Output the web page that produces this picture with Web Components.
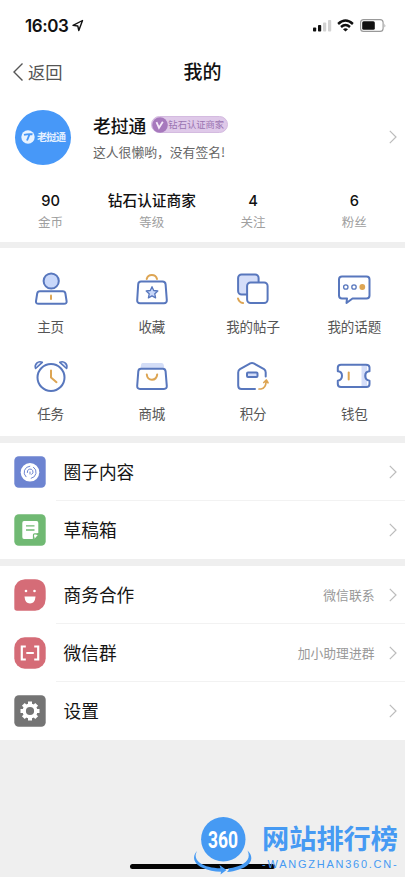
<!DOCTYPE html>
<html lang="zh-CN">
<head>
<meta charset="utf-8">
<title>我的</title>
<style>
html,body{margin:0;background:#efefef}
body{width:405px;height:877px;overflow:hidden;font-family:"Noto Sans CJK SC",sans-serif;color:#111}
</style>
</head>
<body>
<mine-page></mine-page>
<script>
const define = (name, html) => {
  const t = document.createElement('template');
  t.innerHTML = html;
  customElements.define(name, class extends HTMLElement {
    constructor() {
      super();
      this.attachShadow({mode: 'open'}).append(t.content.cloneNode(true));
    }
  });
};

const B = 'fill="none" stroke="#5877bd" stroke-width="2" stroke-linecap="round" stroke-linejoin="round"';
const O = 'fill="none" stroke="#dda553" stroke-width="2" stroke-linecap="round" stroke-linejoin="round"';
const ICONS = {
  home: `<g ${B}><circle cx="20.2" cy="11" r="7.6" style="fill:#c9d8fa"/><path d="M9 21.3H31.6Q34 21.3 34.4 23.5L35.6 31.2Q36 33.8 33 33.8H7.6Q4.6 33.8 5 31.2L6.2 23.5Q6.600 21.300 9 21.300Z"/></g><path ${O} d="M20 25.600V29"/>`,
  favorite: `<path ${O} d="M14.700 9A5.300 5.300 0 0 1 25 9"/><path ${B} d="M9 11.500H30.500Q33.300 11.500 33.600 14.300L34.800 30Q35 33.300 32 33.300H8Q5 33.300 5.200 30L6.200 14.300Q6.400 11.500 9 11.500Z"/><path ${B} style="stroke-width:1.300;fill:#c9d8fa" d="M20 16.700L21.700 20.500L25.800 21L22.800 23.800L23.600 27.900L20 25.900L16.400 27.900L17.200 23.800L14.200 21L18.300 20.500Z"/>`,
  posts: `<rect ${B} x="5.100" y="4.500" width="20.500" height="20" rx="3.500" style="fill:#d5def9"/><rect ${B} x="14.100" y="12.500" width="20.500" height="20.500" rx="3.500" style="fill:#fff"/><path ${O} d="M5 28.500Q6.200 32.500 10 33"/>`,
  topics: `<path ${B} d="M8 6.500H32.500Q35.500 6.500 35.500 9.500V25.500Q35.500 28.500 32.500 28.500H18.500L12.500 33L13 28.500H8Q5 28.500 5 25.500V9.500Q5 6.500 8 6.500Z"/><g ${B} style="stroke-width:1.300"><circle cx="11.800" cy="17" r="2.200"/><circle cx="20" cy="17" r="2.200"/></g><circle cx="28.300" cy="17" r="2.900" fill="#dda553"/>`,
  tasks: `<g ${B}><circle cx="20" cy="20.500" r="13.500"/><path style="stroke-width:1.600;fill:#e4ebff" d="M4.600 11.500C3 7.500 7 3.300 11.300 5.300ZM35.600 11.500C37 7.500 33.200 3.300 28.800 5.300Z"/></g><path ${O} d="M20 13.500V20.500L25.500 25.200"/>`,
  shop: `<path d="M10.500 6H29.500Q31.500 6 31.800 8L32.300 11H8.500L9 8Q9.200 6 10.500 6Z" fill="#d3ddf7"/><path ${B} d="M9 11.800H30.800Q33.300 11.800 33.600 14.300L34.800 28.800Q35 32 32 32H8Q5 32 5.200 28.800L6.300 14.300Q6.500 11.800 9 11.800Z"/><path ${O} d="M14.800 17.500Q15.300 22.700 20 22.700Q24.500 22.700 25.200 17.500"/>`,
  points: `<path ${B} d="M22 32H8.500Q5.200 32 5.200 28.500V15.500Q5.200 13.300 7 12.200L17.300 6.400Q19 5.500 20.700 6.400L31 12.200Q32.700 13.300 32.700 15.500V19.500"/><rect ${B} x="14" y="15.500" width="10.500" height="4.500" rx="1" style="fill:#d5def9"/><path ${O} style="stroke-width:1.700" d="M26 32H28Q32.800 31.500 33.200 24M30.800 25.500L33.300 23L35 25.800"/>`,
  wallet: `<path d="M27.500 8.500H33V30.500H27.500Z" fill="#d5def9"/><path ${B} d="M7 7.700H32Q35.500 7.700 35.500 10.500V14.200Q31.200 14.500 31.200 18.800Q31.200 23.200 35.500 23.700V27Q35.500 30 32.500 30H7Q3.800 30 3.800 27V23.700Q8 23.200 8 18.800Q8 14.500 3.800 14.200V10.500Q3.800 7.700 7 7.700Z"/><path ${O} d="M14.700 15.500V22.500"/>`,
  circle: `<rect x=".3" y=".3" width="31.400" height="31.400" rx="4.500" fill="#6d84d1"/><circle cx="16" cy="16.300" r="9.300" fill="#fff"/><g fill="none" stroke="#6d84d1" stroke-width="1" stroke-linecap="round"><path d="M12 20.800A6.200 6.200 0 0 1 15.800 10.200"/><path d="M19.500 11.200A6.200 6.200 0 0 1 17.200 22.300"/><path d="M13.300 16.500A2.900 2.900 0 1 1 17.700 18.400M16 16V18"/></g>`,
  draft: `<rect x=".3" y=".3" width="31.400" height="31.400" rx="4.500" fill="#70b973"/><path d="M10 7H22.500Q24.300 7 24.300 9V18.500L18.500 25H10Q8.300 25 8.300 23V9Q8.300 7 10 7Z" fill="#fff"/><path d="M12 11.800H20.500M12 16H20.500" stroke="#70b973" stroke-width="1.300"/><path d="M19.500 24.500V20.800Q19.500 19.800 20.500 19.800H24" fill="none" stroke="#70b973" stroke-width="1.200"/><path d="M20.500 24.800V21H23.800Z" fill="#fff"/>`,
  coop: `<path d="M11 .3H21Q31.700 1 31.700 12V20Q31 31 21 31.700H3Q.3 31.700 .3 29V11Q1 1 11 .3Z" fill="#d56c77"/><path d="M10.500 17.500H21.500Q21 24.500 16 24.500Q11 24.500 10.500 17.500Z" fill="#fff"/><circle cx="12" cy="12" r="1.300" fill="#fff"/><circle cx="20.500" cy="12" r="1.300" fill="#fff"/>`,
  group: `<rect x=".3" y=".3" width="31.400" height="31.400" rx="10.500" fill="#d56c77"/><path d="M11.800 9.500H7.800V22.500H11.800M20.200 9.500H24.200V22.500H20.200M12.300 16H19.800" fill="none" stroke="#fff" stroke-width="2.200"/>`,
  settings: `<rect x=".3" y=".3" width="31.400" height="31.400" rx="4.500" fill="#747474"/><circle cx="16" cy="16" r="5.800" fill="none" stroke="#fff" stroke-width="3.400"/><g stroke="#fff" stroke-width="4"><path d="M16 6.500V9.500M16 22.500V25.500M6.500 16H9.500M22.500 16H25.500M9.300 9.300L11.400 11.400M20.600 20.600L22.700 22.700M22.700 9.300L20.600 11.400M11.400 20.600L9.300 22.700"/></g>`
};

customElements.define('app-icon', class extends HTMLElement {
  connectedCallback() {
    const size = this.getAttribute('size') || 40;
    this.attachShadow({mode: 'open'}).innerHTML =
      `<style>:host{display:block;flex:none;width:${size}px;height:${size}px}svg{display:block}</style>
       <svg width="${size}" height="${size}" viewBox="0 0 ${size} ${size}">${ICONS[this.getAttribute('name')]}</svg>`;
  }
});

define('chevron-right', `<style>:host{display:block;flex:none;width:8px;height:14px}svg{display:block}</style>
<svg width="8" height="14" viewBox="0 0 8 14"><path d="M.8 .8L7 7L.8 13.200" fill="none" stroke="#bcbcbc" stroke-width="1.200"/></svg>`);

define('status-bar', `<style>
:host{display:flex;height:50px;box-sizing:border-box;padding:1px 18px 0 25px;align-items:center;color:#111}
b{font:600 17px/20px Inter,sans-serif;letter-spacing:-.45px}
.loc{margin-left:4px}.sp{flex:1}svg{display:block}.wifi{margin:0 6px 0 5px}
</style>
<b>16:03</b><svg class="loc" width="12" height="13" viewBox="0 0 12 13"><path d="M1 6.400L10.500 1.500L6.800 11.500L5.800 7Z" fill="none" stroke="#111" stroke-width="1.400" stroke-linejoin="round"/></svg>
<span class="sp"></span>
<svg width="19" height="13" viewBox="0 0 19 13"><rect x="0" y="8.500" width="3.200" height="4" rx=".8" fill="#111"/><rect x="5" y="6" width="3.200" height="6.500" rx=".8" fill="#111"/><rect x="10" y="3.500" width="3.200" height="9" rx=".8" fill="#d2d2d2"/><rect x="15" y="1" width="3.200" height="11.500" rx=".8" fill="#d2d2d2"/></svg>
<svg class="wifi" width="17" height="13" viewBox="0 0 17 13"><g fill="none" stroke="#111" stroke-width="2.400"><path d="M1.100 5Q8.500 -1.800 15.900 5"/><path d="M4 8Q8.500 4 13 8"/></g><path d="M6 10.200Q8.500 8.200 11 10.200L8.500 12.600Z" fill="#111"/></svg>
<svg width="27" height="13" viewBox="0 0 27 13"><rect x=".6" y=".6" width="22.500" height="11.800" rx="3" fill="none" stroke="#999" stroke-width="1.100"/><rect x="2.200" y="2.200" width="12.600" height="8.600" rx="1.500" fill="#111"/><path d="M24.500 4.500Q26 6.500 24.500 8.500Z" fill="#999"/></svg>`);

define('nav-bar', `<style>
:host{display:grid;grid-template-columns:1fr auto 1fr;height:44px;align-items:center}
.back{display:flex;align-items:center;gap:4px;padding-left:12px;font-size:17.300px;line-height:24px;color:#555}
.back span{padding-bottom:1px}
h1{font-size:19px;line-height:26px;font-weight:500;margin:0;padding-bottom:2px}
</style>
<span class="back"><svg width="12" height="20" viewBox="0 0 12 20"><path d="M10.500 1.500L2 10L10.500 18.500" fill="none" stroke="#555" stroke-width="1.400"/></svg><span>返回</span></span>
<h1><slot></slot></h1>`);

define('vip-badge', `<style>
:host{display:flex;align-items:center;box-sizing:border-box;width:77px;height:17px;border-radius:9px;background:#dfc9e9;border:1px solid #d4bbe0;font-size:9.300px;line-height:15px;color:#9a74b1;white-space:nowrap}
svg{display:block;flex:none}
</style><svg width="16" height="16" viewBox="0 0 16 16"><circle cx="8" cy="8" r="7.800" fill="#a779bd"/><path d="M4.500 5.200L7 10.800L10.800 4.800" fill="none" stroke="#f5eaf9" stroke-width="1.800"/></svg><slot></slot>`);

define('profile-card', `<style>
:host{display:flex;align-items:center;height:86px;padding:0 8px 0 15px}
.av{display:flex;align-items:center;justify-content:center;gap:2px;width:56px;height:55px;border-radius:50%;background:#4798f8;color:#e4f0ff;font-size:10.300px;line-height:14px;font-weight:700;flex:none}
.av span{letter-spacing:-.9px}
.info{flex:1;margin-left:22px;padding-bottom:2px}.line{display:flex;align-items:center;gap:5px;height:26px}
.name{font-size:17.800px;line-height:26px;font-weight:500}
.bio{font-size:12.800px;line-height:19px;color:#666;margin-top:4px}
</style>
<div class="av"><svg width="14" height="14" viewBox="0 0 14 14"><circle cx="7" cy="7" r="6.700" fill="#e8f3ff"/><path d="M3 4.800Q7 3.800 11.500 4.200M8.500 4.500L6 10.500" fill="none" stroke="#4798f8" stroke-width="1.900"/></svg><span>老挝通</span></div>
<div class="info"><div class="line"><span class="name">老挝通</span><vip-badge>钻石认证商家</vip-badge></div><div class="bio">这人很懒哟，没有签名!</div></div>
<chevron-right></chevron-right>`);

define('stat-item', `<style>
:host{display:flex;flex-direction:column;align-items:center;white-space:nowrap}
.v{font-family:Inter,"Noto Sans CJK SC",sans-serif;font-size:14.700px;line-height:20px;height:21px;font-weight:500}
.l{font-size:12.500px;line-height:19px;color:#a0a0a0}
</style><span class="v"><slot></slot></span><span class="l"><slot name="label"></slot></span>`);

define('menu-tile', `<style>
:host{display:flex;flex-direction:column;align-items:center;height:87px;color:#555;font-size:13.500px;line-height:20px}
span{margin-top:6px}
</style><slot name="icon"></slot><span><slot></slot></span>`);

define('list-row', `<style>
:host{display:flex;align-items:center;height:58px;padding:0 8px 0 14px;background:#fff}
.body{flex:1;display:flex;align-items:center;justify-content:space-between;margin-left:17.500px;height:56px;padding-bottom:2px}
.t{font-size:17.700px;line-height:26px;color:#151515}
.n{font-size:12.800px;line-height:19px;color:#999;margin-right:14.500px}
:host([divided]){background:linear-gradient(#f2f2f2,#f2f2f2) 56px 57px/349px 1px no-repeat #fff}
</style><slot name="icon"></slot><span class="body"><span class="t"><slot></slot></span><span class="n"><slot name="note"></slot></span></span><chevron-right></chevron-right>`);

define('brand-mark', `<style>
:host{display:grid;grid-template-columns:60px auto;column-gap:9px;width:212px;height:62px;color:#469af3}
svg{display:block}.words{display:flex;flex-direction:column;align-items:flex-start;white-space:nowrap}
.cn{font-size:27.200px;line-height:34px;font-weight:700;margin-top:5px}
.en{font:500 11px/14px "Liberation Sans",sans-serif;letter-spacing:1.750px;margin-top:3px}
.num{font:700 24px Roboto,sans-serif}
</style>
<svg width="60" height="62" viewBox="0 0 60 62"><circle cx="30.300" cy="24.300" r="22.200" fill="#469af3"/><text class="num" x="30" y="33" text-anchor="middle" textLength="30" lengthAdjust="spacingAndGlyphs" fill="#fff">360</text>
<path d="M4.500 35.500C-1 41 -.5 48 10 53C15 55.500 21 56.500 28 56.800L27.500 59.500L33.500 55L26.500 50L27.500 53.300C19 53 12 51.500 7 48C2 44 1.500 40 4.500 35.500Z" fill="#469af3"/><path d="M54.500 35.500C62 42 60 54 34 57L36 54.500L34.500 53.500C53 51 58.500 44 54.500 35.500Z" fill="#469af3"/></svg>
<div class="words"><span class="cn">网站排行榜</span><span class="en">-WANGZHAN360.CN-</span></div>`);

define('mine-page', `<style>
:host{display:block;position:relative;width:405px;height:877px;background:#efefef;overflow:hidden}
.head{height:242px;background:#fff}
.stats{display:grid;grid-template-columns:repeat(4,1fr);padding-top:11px}
.grid{display:grid;grid-template-columns:repeat(4,1fr);height:188px;box-sizing:border-box;padding-top:22px;margin-top:6px;background:#fff}
.list{margin-top:7px}
.bar{position:absolute;left:130px;top:863.500px;width:145px;height:5px;border-radius:3px;background:#050505}
brand-mark{position:absolute;left:193px;top:815px}
</style>
<div class="head"><status-bar></status-bar><nav-bar>我的</nav-bar><profile-card></profile-card>
<div class="stats"><stat-item>90<span slot="label">金币</span></stat-item><stat-item>钻石认证商家<span slot="label">等级</span></stat-item><stat-item>4<span slot="label">关注</span></stat-item><stat-item>6<span slot="label">粉丝</span></stat-item></div></div>
<div class="grid">
<menu-tile><app-icon slot="icon" name="home"></app-icon>主页</menu-tile>
<menu-tile><app-icon slot="icon" name="favorite"></app-icon>收藏</menu-tile>
<menu-tile><app-icon slot="icon" name="posts"></app-icon>我的帖子</menu-tile>
<menu-tile><app-icon slot="icon" name="topics"></app-icon>我的话题</menu-tile>
<menu-tile><app-icon slot="icon" name="tasks"></app-icon>任务</menu-tile>
<menu-tile><app-icon slot="icon" name="shop"></app-icon>商城</menu-tile>
<menu-tile><app-icon slot="icon" name="points"></app-icon>积分</menu-tile>
<menu-tile><app-icon slot="icon" name="wallet"></app-icon>钱包</menu-tile>
</div>
<div class="list"><list-row divided><app-icon slot="icon" size="32" name="circle"></app-icon>圈子内容</list-row>
<list-row><app-icon slot="icon" size="32" name="draft"></app-icon>草稿箱</list-row></div>
<div class="list"><list-row divided><app-icon slot="icon" size="32" name="coop"></app-icon>商务合作<span slot="note">微信联系</span></list-row>
<list-row divided><app-icon slot="icon" size="32" name="group"></app-icon>微信群<span slot="note">加小助理进群</span></list-row>
<list-row><app-icon slot="icon" size="32" name="settings"></app-icon>设置</list-row></div>
<div class="bar"></div><brand-mark></brand-mark>`);
</script>
</body>
</html>
